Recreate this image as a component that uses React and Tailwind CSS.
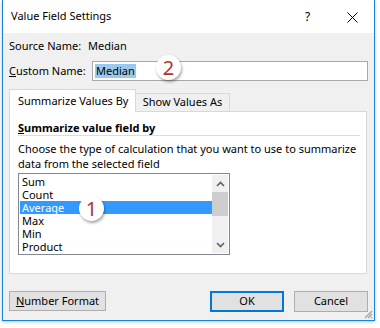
import React from "react";

const font = { fontFamily: '"Noto Sans", "Open Sans", sans-serif' };

function Badge({ n, className }) {
  return (
    <div
      className={`absolute w-[25px] h-[25px] rounded-full bg-white flex items-center justify-center text-[20px] leading-none text-[#b3322a] shadow-[1px_2px_3px_rgba(0,0,0,0.35)] ${className}`}
    >
      {n}
    </div>
  );
}

function Chevron({ up }) {
  return (
    <svg width="9" height="6" viewBox="0 0 9 6">
      <path
        d={up ? "M1 5 L4.5 1.5 L8 5" : "M1 1 L4.5 4.5 L8 1"}
        fill="none"
        stroke="#606060"
        strokeWidth="1.6"
      />
    </svg>
  );
}

export default function App() {
  const items = ["Sum", "Count", "Average", "Max", "Min", "Product"];
  return (
    <div className="w-[380px] h-[328px] bg-white relative overflow-hidden text-[11px] text-black whitespace-nowrap" style={font}>
      <div className="ml-[2px] w-[373px] h-[321px] border-l border-r border-b border-[#1883d7] flex flex-col shadow-[0_1px_3px_rgba(0,0,0,0.25)] relative">
        {/* title bar */}
        <div className="h-[33px] bg-white flex items-center pl-[8px] relative">
          <span className="text-[11px]">Value Field Settings</span>
          <span className="absolute left-[302px] top-[8px] text-[12px]">?</span>
          <svg className="absolute left-[344px] top-[12px]" width="11" height="11" viewBox="0 0 11 11">
            <path d="M0.5 0.5 L10.5 10.5 M10.5 0.5 L0.5 10.5" stroke="#000" strokeWidth="1" />
          </svg>
        </div>
        {/* body */}
        <div className="flex-1 bg-[#f0f0f0] pl-[6px] pr-[6px] flex flex-col relative">
          <div className="mt-[5px] h-[16px] flex items-center">
            <span className="w-[79px]">Source Name:</span>
            <span>Median</span>
          </div>
          <div className="mt-[7px] h-[20px] flex items-center">
            <span className="w-[83px]">
              <span className="underline">C</span>ustom Name:
            </span>
            <div className="flex-1 h-[20px] bg-white border border-[#a8a8a8] flex items-center pl-[2px]">
              <span className="bg-[#99c9ef] h-[14px] leading-[14px] px-[1px]">Median</span>
            </div>
          </div>
          {/* tabs */}
          <div className="mt-[8px] h-[22px] flex items-end">
            <div className="relative z-10 h-[23px] -mb-px w-[127px] bg-white border border-b-0 border-[#d9d9d9] pl-[8px] flex items-center">
              Summarize Values By
            </div>
            <div className="h-[18px] w-[94px] border-t border-r border-[#d9d9d9] bg-[#f0f0f0] flex items-center justify-center">
              Show Values As
            </div>
          </div>
          <div className="w-[358px] h-[163px] bg-white border border-[#d9d9d9] pl-[8px] pr-[6px] pt-[8px] flex flex-col">
            <div className="h-[15px] leading-[15px] font-bold">
              <span className="underline">S</span>ummarize value field by
            </div>
            <div className="h-px bg-[#dcdcdc]" />
            <div className="mt-[5px] leading-[15px]">
              Choose the type of calculation that you want to use to summarize
              <br />
              data from the selected field
            </div>
            <div className="mt-[2px] w-[212px] h-[82px] border border-[#828790] p-px flex">
              <div className="w-[192px] flex flex-col">
                {items.map((it) => (
                  <div
                    key={it}
                    className={`h-[13px] leading-[13px] pl-[2px] ${it === "Average" ? "bg-[#3399ff] text-white" : ""}`}
                  >
                    {it}
                  </div>
                ))}
              </div>
              <div className="w-[16px] bg-[#f0f0f0] flex flex-col">
                <div className="h-[17px] flex items-center justify-center">
                  <Chevron up />
                </div>
                <div className="h-[24px] bg-[#cdcdcd]" />
                <div className="flex-1" />
                <div className="h-[17px] flex items-center justify-center">
                  <Chevron />
                </div>
              </div>
            </div>
          </div>
          {/* buttons */}
          <div className="mt-[17px] h-[20px] flex">
            <div className="w-[97px] h-[20px] bg-[#e1e1e1] border border-[#adadad] flex items-center justify-center">
              <span>
                <span className="underline">N</span>umber Format
              </span>
            </div>
            <div className="flex-1" />
            <div className="w-[74px] h-[21px] bg-[#e1e1e1] border-2 border-[#0078d7] flex items-center justify-center">
              OK
            </div>
            <div className="ml-[10px] w-[74px] h-[21px] bg-[#e1e1e1] border border-[#adadad] flex items-center justify-center">
              Cancel
            </div>
          </div>
          {/* resize grip */}
          <svg className="absolute right-[1px] bottom-[1px]" width="10" height="10" viewBox="0 0 10 10">
            <path d="M9 2 L2 9 M9 5 L5 9 M9 8 L8 9" stroke="#a0a0a0" strokeWidth="1.2" />
          </svg>
        </div>
        <Badge n="2" className="left-[153px] top-[55px]" />
        <Badge n="1" className="left-[76px] top-[196px]" />
      </div>
    </div>
  );
}
